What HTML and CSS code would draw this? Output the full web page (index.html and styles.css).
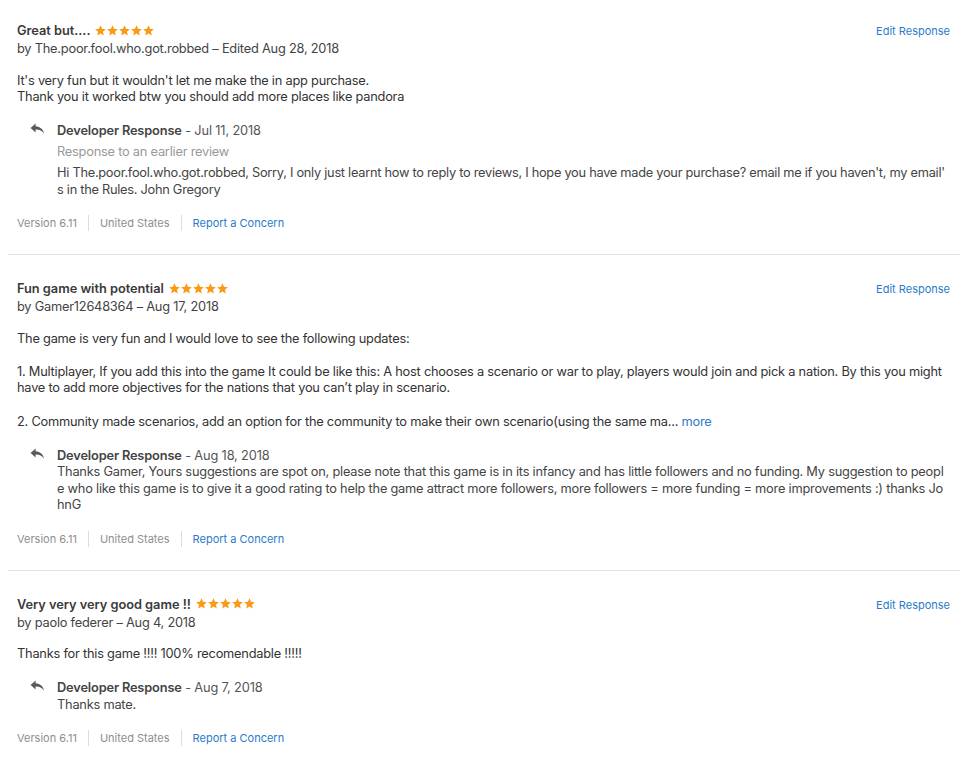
FILE: index.html
```html
<!DOCTYPE html>
<html>
<head>
<meta charset="utf-8">
<link rel="stylesheet" href="styles.css">
</head>
<body>
<div class="reviews">

  <div class="review">
    <div class="review-head">
      <div class="head-main">
        <div class="title">Great but.... <svg class="stars" viewBox="0 0 60 11" width="60" height="11"><g fill="#fb9a16"><path id="s" d="M5.5 0.3l1.55 3.5 3.8 0.35-2.9 2.5 0.87 3.75-3.32-2-3.32 2 0.87-3.75-2.9-2.5 3.8-0.35z"/><use href="#s" x="12"/><use href="#s" x="24"/><use href="#s" x="36"/><use href="#s" x="48"/></g></svg></div>
        <div class="byline">by The.poor.fool.who.got.robbed – Edited Aug 28, 2018</div>
      </div>
      <a class="edit">Edit Response</a>
    </div>
    <p class="body">It's very fun but it wouldn't let me make the in app purchase.
Thank you it worked btw you should add more places like pandora</p>
    <div class="dev">
      <svg class="reply" viewBox="0 0 15 12" width="15" height="12"><path d="M5.6 0.5 L0.6 5 L5.6 9.4 V6.6 C9.4 6.5 11.9 7.6 14 10.8 C13.3 6.6 10.4 3.6 5.6 3.3 Z" fill="#5a5a5a"/></svg>
      <div class="dev-main">
        <div class="dev-head"><span class="dev-name">Developer Response</span> - Jul 11, 2018</div>
        <div class="earlier">Response to an earlier review</div>
        <div class="dev-text tight">Hi The.poor.fool.who.got.robbed, Sorry, I only just learnt how to reply to reviews, I hope you have made your purchase? email me if you haven't, my email'<wbr>s in the Rules. John Gregory</div>
      </div>
    </div>
    <div class="meta">
      <span class="meta-item">Version 6.11</span>
      <span class="meta-item">United States</span>
      <a class="meta-item link">Report a Concern</a>
    </div>
  </div>

  <div class="review">
    <div class="review-head">
      <div class="head-main">
        <div class="title">Fun game with potential <svg class="stars" viewBox="0 0 60 11" width="60" height="11"><g fill="#fb9a16"><use href="#s" x="0"/><use href="#s" x="12"/><use href="#s" x="24"/><use href="#s" x="36"/><use href="#s" x="48"/></g></svg></div>
        <div class="byline">by Gamer12648364 – Aug 17, 2018</div>
      </div>
      <a class="edit">Edit Response</a>
    </div>
    <p class="body">The game is very fun and I would love to see the following updates:</p>
    <p class="body para">1. Multiplayer, If you add this into the game It could be like this: A host chooses a scenario or war to play, players would join and pick a nation. By this you might have to add more objectives for the nations that you can’t play in scenario.</p>
    <p class="body para">2. Community made scenarios, add an option for the community to make their own scenario(using the same ma... <a class="more">more</a></p>
    <div class="dev">
      <svg class="reply" viewBox="0 0 15 12" width="15" height="12"><path d="M5.6 0.5 L0.6 5 L5.6 9.4 V6.6 C9.4 6.5 11.9 7.6 14 10.8 C13.3 6.6 10.4 3.6 5.6 3.3 Z" fill="#5a5a5a"/></svg>
      <div class="dev-main">
        <div class="dev-head"><span class="dev-name">Developer Response</span> - Aug 18, 2018</div>
        <div class="dev-text">Thanks Gamer, Yours suggestions are spot on, please note that this game is in its infancy and has little followers and no funding. My suggestion to people who like this game is to give it a good rating to help the game attract more followers, more followers = more funding = more improvements :) thanks JohnG</div>
      </div>
    </div>
    <div class="meta">
      <span class="meta-item">Version 6.11</span>
      <span class="meta-item">United States</span>
      <a class="meta-item link">Report a Concern</a>
    </div>
  </div>

  <div class="review">
    <div class="review-head">
      <div class="head-main">
        <div class="title">Very very very good game !! <svg class="stars" viewBox="0 0 60 11" width="60" height="11"><g fill="#fb9a16"><use href="#s" x="0"/><use href="#s" x="12"/><use href="#s" x="24"/><use href="#s" x="36"/><use href="#s" x="48"/></g></svg></div>
        <div class="byline">by paolo federer – Aug 4, 2018</div>
      </div>
      <a class="edit">Edit Response</a>
    </div>
    <p class="body">Thanks for this game !!!! 100% recomendable !!!!!</p>
    <div class="dev">
      <svg class="reply" viewBox="0 0 15 12" width="15" height="12"><path d="M5.6 0.5 L0.6 5 L5.6 9.4 V6.6 C9.4 6.5 11.9 7.6 14 10.8 C13.3 6.6 10.4 3.6 5.6 3.3 Z" fill="#5a5a5a"/></svg>
      <div class="dev-main">
        <div class="dev-head"><span class="dev-name">Developer Response</span> - Aug 7, 2018</div>
        <div class="dev-text">Thanks mate.</div>
      </div>
    </div>
    <div class="meta">
      <span class="meta-item">Version 6.11</span>
      <span class="meta-item">United States</span>
      <a class="meta-item link">Report a Concern</a>
    </div>
  </div>

</div>
</body>
</html>
```
FILE: styles.css
```css
html, body {
  background: #ffffff;
}
body {
  margin: 8px;
  font-family: Inter, "Noto Sans", "Liberation Sans", sans-serif;
  font-size: 12.8px;
  letter-spacing: -0.22px;
  color: #333333;
}
.reviews {
  width: 952px;
}
.review {
  padding: 25px 10px 23px 9px;
  border-bottom: 1px solid #e2e2e2;
}
.review:first-child {
  padding-top: 14px;
}
.review-head {
  display: flex;
  justify-content: space-between;
  align-items: flex-start;
}
.title {
  font-weight: 600;
  line-height: 18px;
  letter-spacing: -0.03px;
  color: #3a3a3a;
}
.stars {
  vertical-align: -0.5px;
  margin-left: 2px;
}
.byline {
  line-height: 18px;
  color: #444444;
}
.edit {
  font-size: 11px;
  letter-spacing: 0;
  line-height: 16px;
  margin-top: 1px;
  color: #2a7bc9;
}
.body {
  margin: 14.5px 0 0 0;
  line-height: 16.6px;
  white-space: pre-line;
  color: #333333;
}
.body.para {
  margin-top: 16.6px;
}
.more {
  color: #2a7bc9;
}
.dev {
  display: flex;
  align-items: flex-start;
  gap: 12px;
  margin-top: 17.5px;
  padding-left: 13px;
}
.reply {
  flex: none;
  margin-top: 0;
}
.dev-main {
  flex: 1;
  min-width: 0;
  line-height: 16.6px;
}
.dev-head {
  color: #555555;
  letter-spacing: -0.15px;
}
.dev-name {
  font-weight: 600;
  color: #444444;
}
.earlier {
  margin: 4.5px 0;
  color: #999999;
}
.dev-text {
  word-break: break-all;
  letter-spacing: -0.22px;
  color: #444444;
}
.dev-text.tight {
  letter-spacing: -0.27px;
}
.meta {
  display: flex;
  align-items: center;
  margin-top: 16.5px;
  font-size: 11px;
  letter-spacing: 0;
  line-height: 16px;
  color: #8e8e8e;
}
.meta-item {
  padding: 0 11px;
  border-left: 1px solid #dddddd;
}
.meta-item:first-child {
  padding-left: 0;
  border-left: none;
}
.link {
  color: #2a7bc9;
}
```
